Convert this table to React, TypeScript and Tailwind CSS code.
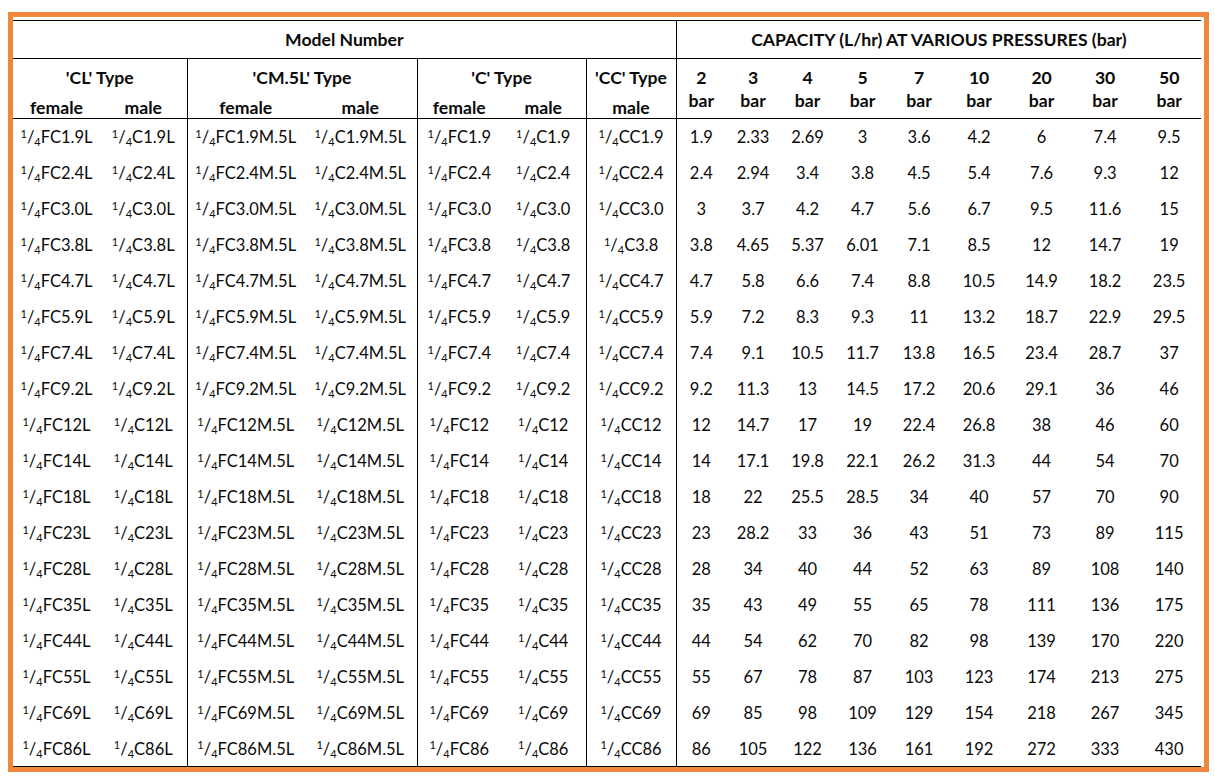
import React from 'react';

/** One model-number row: size suffix for the model codes, then flow at each pressure. */
type Row = {
  suffix: string;
  cc?: string;
  flows: string[];
};

const ROWS: Row[] = [
  { suffix: '1.9', flows: ['1.9', '2.33', '2.69', '3', '3.6', '4.2', '6', '7.4', '9.5'] },
  { suffix: '2.4', flows: ['2.4', '2.94', '3.4', '3.8', '4.5', '5.4', '7.6', '9.3', '12'] },
  { suffix: '3.0', flows: ['3', '3.7', '4.2', '4.7', '5.6', '6.7', '9.5', '11.6', '15'] },
  { suffix: '3.8', cc: 'C3.8', flows: ['3.8', '4.65', '5.37', '6.01', '7.1', '8.5', '12', '14.7', '19'] },
  { suffix: '4.7', flows: ['4.7', '5.8', '6.6', '7.4', '8.8', '10.5', '14.9', '18.2', '23.5'] },
  { suffix: '5.9', flows: ['5.9', '7.2', '8.3', '9.3', '11', '13.2', '18.7', '22.9', '29.5'] },
  { suffix: '7.4', flows: ['7.4', '9.1', '10.5', '11.7', '13.8', '16.5', '23.4', '28.7', '37'] },
  { suffix: '9.2', flows: ['9.2', '11.3', '13', '14.5', '17.2', '20.6', '29.1', '36', '46'] },
  { suffix: '12', flows: ['12', '14.7', '17', '19', '22.4', '26.8', '38', '46', '60'] },
  { suffix: '14', flows: ['14', '17.1', '19.8', '22.1', '26.2', '31.3', '44', '54', '70'] },
  { suffix: '18', flows: ['18', '22', '25.5', '28.5', '34', '40', '57', '70', '90'] },
  { suffix: '23', flows: ['23', '28.2', '33', '36', '43', '51', '73', '89', '115'] },
  { suffix: '28', flows: ['28', '34', '40', '44', '52', '63', '89', '108', '140'] },
  { suffix: '35', flows: ['35', '43', '49', '55', '65', '78', '111', '136', '175'] },
  { suffix: '44', flows: ['44', '54', '62', '70', '82', '98', '139', '170', '220'] },
  { suffix: '55', flows: ['55', '67', '78', '87', '103', '123', '174', '213', '275'] },
  { suffix: '69', flows: ['69', '85', '98', '109', '129', '154', '218', '267', '345'] },
  { suffix: '86', flows: ['86', '105', '122', '136', '161', '192', '272', '333', '430'] },
];

const PRESSURES = ['2', '3', '4', '5', '7', '10', '20', '30', '50'];

/** Column widths in px, left to right. */
const COL_WIDTHS = [87, 87, 117, 113, 84, 85, 90, 50, 54, 55, 55, 58, 62, 63, 64, 64];

/** "¼" thread-size prefix set as a stacked fraction. */
function Quarter(): JSX.Element {
  return (
    <>
      <sup className="text-[11px]">1</sup>/<sub className="text-[11px]">4</sub>
    </>
  );
}

function Model({ code }: { code: string }): JSX.Element {
  return (
    <span className="whitespace-nowrap">
      <Quarter />
      {code}
    </span>
  );
}

const sub = 'pt-[5px] align-top font-bold leading-[20px]';

export default function App(): JSX.Element {
  return (
    <div className="min-h-[780px] bg-white pt-[12px] pl-[8px] text-[16.5px] text-[#0a0a0a] [font-family:Lato,'Open_Sans',sans-serif]">
      <div className="w-[1201px] border-[5px] border-[#f0883c] pt-[3px] pr-[3px]">
        <table className="w-[1188px] table-fixed border-collapse">
          <colgroup>
            {COL_WIDTHS.map((w, i) => (
              <col key={i} style={{ width: w }} />
            ))}
          </colgroup>
          <thead className="text-[17.6px]">
            <tr className="h-[38px] border-t border-b border-black">
              <th colSpan={7} className="border-r border-black pt-[1px] text-center font-bold">
                Model Number
              </th>
              <th colSpan={9} className="pt-[1px] text-center font-bold">
                CAPACITY (L/hr) AT VARIOUS PRESSURES (bar)
              </th>
            </tr>
            <tr className="h-[34px]">
              <th colSpan={2} className="border-r border-black pt-[5px] align-middle font-bold">
                'CL' Type
              </th>
              <th colSpan={2} className="border-r border-black pt-[5px] align-middle font-bold">
                'CM.5L' Type
              </th>
              <th colSpan={2} className="border-r border-black pt-[5px] align-middle font-bold">
                'C' Type
              </th>
              <th className="border-r border-black pt-[5px] align-middle font-bold">'CC' Type</th>
              {PRESSURES.map((p) => (
                <th key={p} rowSpan={2} className="pt-[2px] align-middle font-bold leading-[23px]">
                  {p}
                  <br />
                  bar
                </th>
              ))}
            </tr>
            <tr className="h-[25px] border-b border-black">
              <th className={sub}>female</th>
              <th className={`border-r border-black ${sub}`}>male</th>
              <th className={sub}>female</th>
              <th className={`border-r border-black ${sub}`}>male</th>
              <th className={sub}>female</th>
              <th className={`border-r border-black ${sub}`}>male</th>
              <th className={`border-r border-black ${sub}`}>male</th>
            </tr>
          </thead>
          <tbody>
            {ROWS.map((r, i) => (
              <tr
                key={r.suffix}
                className={i === ROWS.length - 1 ? 'h-[36px] border-b border-black' : 'h-[36px]'}
              >
                <td className="pt-[3px] text-center">
                  <Model code={`FC${r.suffix}L`} />
                </td>
                <td className="border-r border-black pt-[3px] text-center">
                  <Model code={`C${r.suffix}L`} />
                </td>
                <td className="pt-[3px] text-center">
                  <Model code={`FC${r.suffix}M.5L`} />
                </td>
                <td className="border-r border-black pt-[3px] text-center">
                  <Model code={`C${r.suffix}M.5L`} />
                </td>
                <td className="pt-[3px] text-center">
                  <Model code={`FC${r.suffix}`} />
                </td>
                <td className="border-r border-black pt-[3px] text-center">
                  <Model code={`C${r.suffix}`} />
                </td>
                <td className="border-r border-black pt-[3px] text-center">
                  <Model code={r.cc ?? `CC${r.suffix}`} />
                </td>
                {r.flows.map((f, j) => (
                  <td key={j} className="pt-[3px] text-center">
                    {f}
                  </td>
                ))}
              </tr>
            ))}
          </tbody>
        </table>
      </div>
    </div>
  );
}
